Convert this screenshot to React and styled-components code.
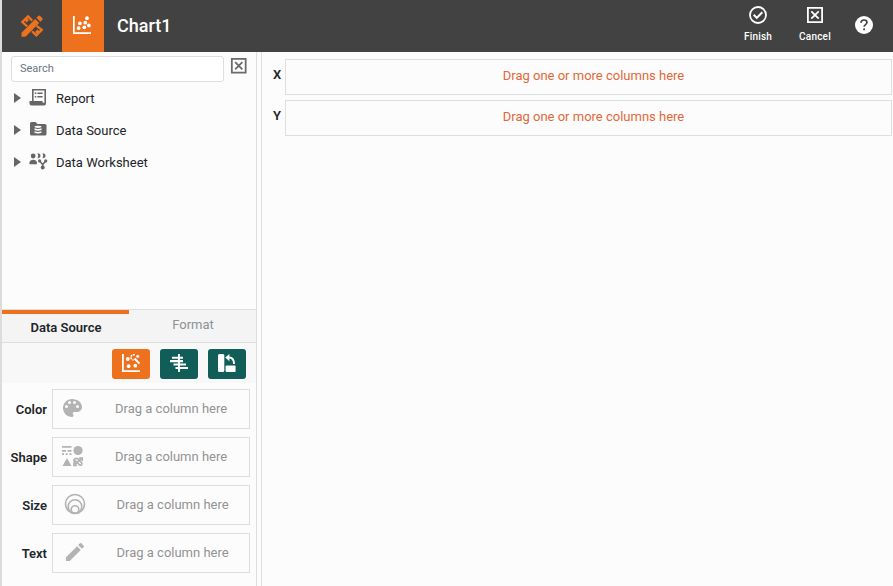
import React from "react";
import styled, { createGlobalStyle } from "styled-components";

const Global = createGlobalStyle`
  * { box-sizing: border-box; }
  body { margin: 0; background: #fcfcfc; font-family: Roboto, sans-serif; font-size: 13px; color: #212529; overflow: hidden; }
  svg { display: block; flex: none; }
`;
const Page = styled.div`
  width: 893px; height: 586px; display: flex; flex-direction: column;
  border-left: 2px solid #dcdcdc; background: #fcfcfc;
`;
const Header = styled.header`
  height: 52px; flex: none; display: flex; align-items: stretch; background: #424242; color: #fff;
`;
const Logo = styled.div`
  width: 60px; display: flex; align-items: center; justify-content: center; color: #ee711d;
`;
const ChartTab = styled.div`
  width: 42px; background: #ee711d; display: flex; align-items: center; justify-content: center; padding: 0 2px 2px 0;
`;
const Title = styled.h1`
  margin: 0 auto 0 13px; font-size: 18px; font-weight: 500; line-height: 52px;
`;
const HeaderAction = styled.button`
  width: 57px; padding: 5px 0 0; border: 0; background: none; color: #fff;
  display: flex; flex-direction: column; align-items: center; gap: 5px;
  font: 500 10px/13px Roboto, sans-serif; letter-spacing: 0.2px;
`;
const ActionLabel = styled.span`padding-left: 1px;`;
const Help = styled.div`
  width: 49px; display: flex; align-items: center; padding: 0 0 2px 11px; margin-left: 1px;
`;
const Body = styled.div`flex: 1; display: flex; min-height: 0;`;
const Sidebar = styled.aside`
  width: 255px; flex: none; border-right: 1px solid #dedede; display: flex; flex-direction: column;
`;
const SearchRow = styled.div`
  display: flex; padding: 4px 0 0 9px; gap: 5px; height: 30px; color: #6a6a6a;
`;
const Search = styled.input`
  width: 213px; flex: none; height: 26px; border: 1px solid #dedede; border-radius: 3px; background: #fff;
  padding: 0 8px 1px; font: 11px Roboto, sans-serif; outline: 0;
  &::placeholder { color: #6c757d; opacity: 1; }
`;
const Tree = styled.div`height: 227px;`;
const TreeRow = styled.div`
  height: 32px; display: flex; align-items: center; padding-left: 12px; color: #666;
  > svg { margin-bottom: 1px; }
`;
const TreeIcon = styled.span`margin: 0 8px 2px 8px;`;
const TreeLabel = styled.span`color: #212529;`;
const Tabs = styled.div`
  height: 34px; flex: none; display: flex; background: #f4f4f4; border-top: 1px solid #dedede; border-bottom: 1px solid #dedede;
`;
const Tab = styled.div`
  width: 127px; text-align: center; border-top: ${p => p.$active ? "4px solid #ee711d" : "0"};
  padding-left: 1px;
  color: ${p => p.$active ? "#212529" : "#8d9297"}; font-weight: ${p => p.$active ? 600 : 400};
  line-height: ${p => p.$active ? "27px" : "29px"};
`;
const Toolbar = styled.div`
  height: 40px; flex: none; display: flex; justify-content: flex-end; gap: 10px; padding: 6px 10px 4px 0; background: #f8f8f8;
`;
const ToolButton = styled.button`
  width: 38px; height: 30px; border: 0; border-radius: 3px; padding: 0 0 2px; color: #fff;
  display: flex; align-items: center; justify-content: center;
  background: ${p => p.$primary ? "#ee711d" : "#115e59"};
`;
const Fields = styled.div`display: flex; flex-direction: column; gap: 8px; padding-top: 6px;`;
const Field = styled.div`display: flex; align-items: center; height: 40px;`;
const FieldLabel = styled.div`width: 45px; text-align: right; font-weight: 600; margin-right: 5px; padding-top: 1px;`;
const DropBox = styled.div`
  width: 198px; height: 40px; border: 1px solid #dedede; display: flex; align-items: center;
  padding: 0 0 2px ${p => p.$inset}px; color: #b3b3b3;
`;
const DropText = styled.span`
  flex: 1; padding-left: ${p => p.$gap}px; padding-top: 1px; color: #939393;
`;
const Splitter = styled.div`width: 5px; flex: none; border-right: 1px solid #dedede;`;
const Main = styled.main`flex: 1; padding: 7px 1px 0 11px; display: flex; flex-direction: column; gap: 5px;`;
const Axis = styled.div`display: flex; height: 36px;`;
const AxisLabel = styled.div`width: 12px; font-weight: 600; line-height: 32px;`;
const AxisDrop = styled.div`
  flex: 1; border: 1px solid #dedede; color: #e26839; text-align: center; line-height: 32px;
  padding-left: 10px;
`;

const Svg = ({ w = 24, h = w, box = "0 0 24 24", children }) => (
  <svg width={w} height={h} viewBox={box} fill="currentColor">{children}</svg>
);
const LogoIcon = () => (
  <Svg>
    <g fill="none" stroke="currentColor" strokeWidth="2.3">
      <path d="M7.200 12.300 2.300 8 8 2.400l4.200 4.200M8.200 5.200 5.800 7.600" />
      <path d="m16.600 11.800 5.200 4.100-5.500 5.500-4.300-4.200M15.800 18.800l2.500-2.500" />
    </g>
    <path d="M1.500 18.700 15.200 5l4 4L5.500 22.700H1.500zM16.400 3.800 18.200 2q1-1 2 0l2 2q1 1 0 2l-1.800 1.800z" />
  </Svg>
);
const ScatterIcon = () => (
  <Svg w={18} box="0 0 18 18">
    <path d="M0 0h1.700v16.300H18V18H0z" />
    <circle cx="5.600" cy="12.200" r="1.850" /><circle cx="6.900" cy="7.400" r="1.850" /><circle cx="11.300" cy="11.300" r="1.850" />
    <circle cx="12.300" cy="6.700" r="1.850" /><circle cx="14" cy="2.200" r="1.850" /><circle cx="15.800" cy="9.400" r="1.850" />
  </Svg>
);
const CheckIcon = () => (
  <Svg w={20} box="0 0 20 20"><g fill="none" stroke="currentColor"><circle cx="10" cy="10" r="8" strokeWidth="1.800" /><path d="m5.700 9.800 3.100 3.100 5.500-5.700" strokeWidth="2" /></g></Svg>
);
const CloseIcon = ({ w }) => (
  <Svg w={w} box="0 0 20 20"><g fill="none" stroke="currentColor" strokeWidth="1.800"><path d="M2.900 2.900h14.200v14.200H2.900zM6.300 6.300l7.400 7.400M13.700 6.300l-7.400 7.400" /></g></Svg>
);
const HelpIcon = () => (
  <Svg w={18} box="0 0 18 18"><circle cx="9" cy="9" r="9" /><path d="M6 6.800q0-2.800 3-2.800t3 2.600c0 2-2.900 2-2.900 4.100M9.100 12.300v2" fill="none" stroke="#424242" strokeWidth="1.600" /></Svg>
);
const Arrow = () => <Svg w={7} h={10} box="0 0 7 10"><path d="M0 0 7 5 0 10z" /></Svg>;
const ReportIcon = () => (
  <Svg w={19} box="0 0 19 19">
    <path d="M3 1h14v14.500a2 2 0 0 1-2 2H2.500a2 2 0 0 1-2-2V13H3z" />
    <path d="M4.600 2.600h10.800v12.200h-1.800V13h-9z" fill="#fcfcfc" />
    <path d="M5.800 4.500h1.500V6H5.800zM8.400 4.500h5.200V6H8.400zM5.800 8h1.500v1.500H5.800zM8.400 8h5.200v1.500H8.400z" />
  </Svg>
);
const FolderIcon = () => (
  <Svg w={19} box="0 0 19 19">
    <path d="M1.500 2h5l2 2H16q1.500 0 1.500 1.500v8.500q0 1.500-1.500 1.500H2.500Q1 15.500 1 14V3.500Q1 2 2.500 2z" />
    <g fill="#fcfcfc"><ellipse cx="9" cy="6.800" rx="3.500" ry="1.100" /><path d="M5.500 8.300q3.500 1.600 7 0v1.600q-3.500 1.600-7 0zM5.500 11.200q3.500 1.600 7 0v1.600q-3.500 1.600-7 0z" /></g>
  </Svg>
);
const WorksheetIcon = () => (
  <Svg w={19} box="0 0 19 19">
    <circle cx="4.200" cy="4" r="2.400" /><path d="M.5 12.300v-2q.5-2.500 3.700-2.500t3.700 2.500v2z" />
    <path d="M8.500 1.200q3 .2 3 2.500t-3 2.600q1.300-2.600 0-5.100zM13.500 1.200q3 .2 3 2.500t-3 2.600q1.300-2.600 0-5.100z" />
    <circle cx="10.600" cy="8.900" r="1.600" /><circle cx="16.700" cy="8.900" r="1.600" /><circle cx="13.700" cy="15.400" r="2" />
    <path d="m10.600 9 3.100 3.500 3-3.500M13.700 12v3" fill="none" stroke="currentColor" strokeWidth="1.600" />
  </Svg>
);
const WandChartIcon = () => (
  <Svg w={18} box="0 0 18 18">
    <path d="M0 0h1.800v16.200H18V18H0z" /><circle cx="5.800" cy="5" r="1.900" /><circle cx="6.600" cy="12.200" r="1.900" /><circle cx="13.300" cy="11.700" r="1.900" />
    <path d="m12.500 4.500 5 5" fill="none" stroke="currentColor" strokeWidth="1.900" />
    <path d="M12.800 1a2.600 2.600 0 1 0-1.200 4.900" fill="none" stroke="currentColor" strokeWidth="1.500" strokeDasharray="1.900 .7" />
    <circle cx="15.700" cy="2.200" r="1.500" />
  </Svg>
);
const AlignIcon = () => (
  <Svg w={18} box="0 0 18 18"><path d="M8 0h1.900v18H8zM2 2.700h11v2.100H2zM0 6.100h13v2.100H0zM3.500 9.500H16v2.100H3.500zM5.500 12.900H18V15H5.500z" /></Svg>
);
const SwapIcon = () => (
  <Svg w={18} box="0 0 18 18"><rect width="6.300" height="18" rx="1.500" /><rect x="7.600" y="11.500" width="10" height="6.500" rx="1" /><path d="M9.500 3.500h1.500q5 0 5 6.500" fill="none" stroke="currentColor" strokeWidth="1.800" /><path d="m7.200 3.600 4.200-3.600v7.200z" /></Svg>
);
const PaletteIcon = () => (
  <Svg><path d="M12 3C7 3 3 7 3 12s4 9 9 9c.8 0 1.500-.7 1.500-1.500 0-.4-.2-.7-.4-1-.2-.3-.4-.6-.4-1 0-.8.7-1.500 1.500-1.500H17c2.800 0 5-2.200 5-5C22 6.600 17.500 3 12 3zM6.500 12a1.500 1.500 0 1 1 0-3 1.500 1.500 0 0 1 0 3zm3-4a1.500 1.500 0 1 1 0-3 1.500 1.500 0 0 1 0 3zm5 0a1.500 1.500 0 1 1 0-3 1.500 1.500 0 0 1 0 3zm3 4a1.500 1.500 0 1 1 0-3 1.500 1.500 0 0 1 0 3z" /></Svg>
);
const ShapeIcon = () => (
  <Svg><path d="M1 2h9.500v1.800H1zM1 6h4v1.700H1zM6.500 6h4v1.700h-4zM1 9.300h2V11H1zM4.700 9.300h2V11h-2zM8.500 9.300h2V11h-2zM1.500 22 6 14l4.500 8z" /><circle cx="17" cy="6.500" r="4.600" />
    <g fill="none" stroke="currentColor" strokeWidth="1.700"><path d="m13 21.500 8.300-8M15.800 18.700A2.200 2.200 0 1 1 17 15.200l3.500 3.500a1.500 1.500 0 1 1-2.300 2L14 16.500M18 14h3.200v3M13 18.500v3h3" /></g></Svg>
);
const SizeIcon = () => (
  <Svg><g fill="none" stroke="currentColor" strokeWidth="1.600"><circle cx="12" cy="12" r="9.500" /><circle cx="12" cy="14.500" r="6.800" /><circle cx="12" cy="17.500" r="3.800" /></g></Svg>
);
const PencilIcon = () => (
  <Svg><path d="M3 17.250V21h3.750L17.810 9.940l-3.750-3.750zM20.710 7.040a1 1 0 0 0 0-1.410l-2.340-2.340a1 1 0 0 0-1.410 0l-1.830 1.830 3.750 3.750z" /></Svg>
);

const tree = [["Report", ReportIcon], ["Data Source", FolderIcon], ["Data Worksheet", WorksheetIcon]];
const fields = [
  { label: "Color", Icon: PaletteIcon, inset: 7, gap: 31 },
  { label: "Shape", Icon: ShapeIcon, inset: 8, gap: 30 },
  { label: "Size", Icon: SizeIcon, inset: 9.5, gap: 30 },
  { label: "Text", Icon: PencilIcon, inset: 9.5, gap: 30 },
];

export default function App() {
  return (
    <Page>
      <Global />
      <Header>
        <Logo><LogoIcon /></Logo>
        <ChartTab><ScatterIcon /></ChartTab>
        <Title>Chart1</Title>
        <HeaderAction><CheckIcon /><ActionLabel>Finish</ActionLabel></HeaderAction>
        <HeaderAction><CloseIcon w={20} /><ActionLabel>Cancel</ActionLabel></HeaderAction>
        <Help><HelpIcon /></Help>
      </Header>
      <Body>
        <Sidebar>
          <SearchRow><Search placeholder="Search" /><CloseIcon w={19.500} /></SearchRow>
          <Tree>
            {tree.map(([label, Icon]) => (
              <TreeRow key={label}><Arrow /><TreeIcon><Icon /></TreeIcon><TreeLabel>{label}</TreeLabel></TreeRow>
            ))}
          </Tree>
          <Tabs><Tab $active>Data Source</Tab><Tab>Format</Tab></Tabs>
          <Toolbar>
            <ToolButton $primary><WandChartIcon /></ToolButton>
            <ToolButton><AlignIcon /></ToolButton>
            <ToolButton><SwapIcon /></ToolButton>
          </Toolbar>
          <Fields>
            {fields.map(({ label, Icon, inset, gap }) => (
              <Field key={label}>
                <FieldLabel>{label}</FieldLabel>
                <DropBox $inset={inset}><Icon /><DropText $gap={gap}>Drag a column here</DropText></DropBox>
              </Field>
            ))}
          </Fields>
        </Sidebar>
        <Splitter />
        <Main>
          {["X", "Y"].map(a => (
            <Axis key={a}><AxisLabel>{a}</AxisLabel><AxisDrop>Drag one or more columns here</AxisDrop></Axis>
          ))}
        </Main>
      </Body>
    </Page>
  );
}
